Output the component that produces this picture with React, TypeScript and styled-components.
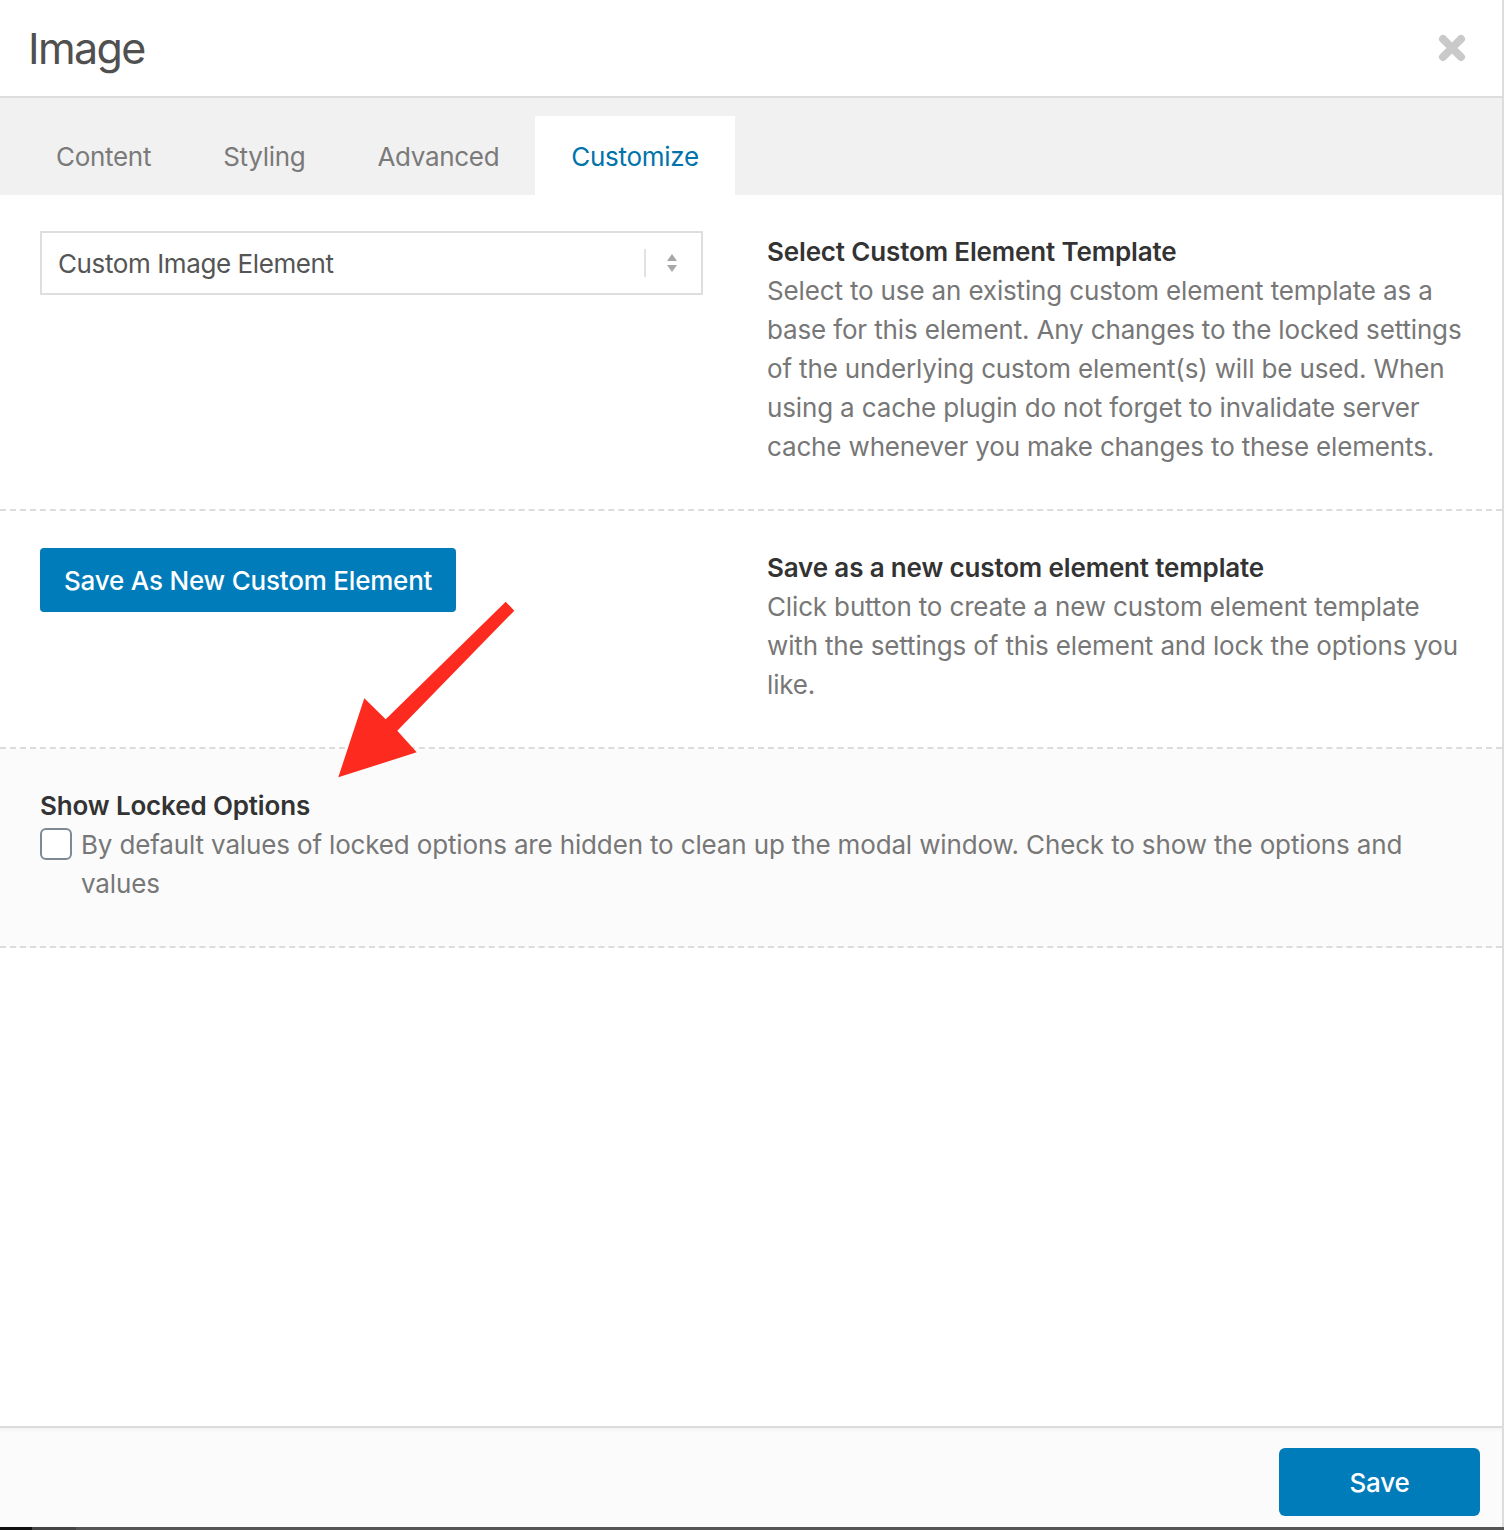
import React from "react";
import styled, { createGlobalStyle } from "styled-components";

const GlobalStyle = createGlobalStyle`
  html, body {
    margin: 0;
    padding: 0;
    background: #dcdcdc;
  }
  body {
    font-family: Inter, "Noto Sans", "Liberation Sans", sans-serif;
    letter-spacing: -0.15px;
    -webkit-font-smoothing: antialiased;
  }
  * {
    box-sizing: border-box;
  }
`;

const Page = styled.div`
  position: relative;
  width: 1504px;
  height: 1530px;
  display: flex;
  flex-direction: column;
`;

const Dialog = styled.div`
  width: 1502px;
  height: 1527px;
  background: #fff;
  display: flex;
  flex-direction: column;
`;

const BottomStrip = styled.div`
  height: 3px;
  background: linear-gradient(to right, #111 0 32px, #444 32px 76px, #555 76px);
`;

const Header = styled.header`
  height: 98px;
  border-bottom: 2px solid #ddd;
  display: flex;
  align-items: center;
  justify-content: space-between;
  padding: 0 36px 0 28px;
`;

const Title = styled.h1`
  margin: 0;
  font-size: 43px;
  font-weight: 400;
  color: #505050;
  letter-spacing: -1.6px;
`;

const CloseButton = styled.button`
  border: 0;
  background: none;
  padding: 0;
  width: 28px;
  height: 28px;
  display: flex;
  align-items: center;
  justify-content: center;
  cursor: pointer;
`;

const TabBar = styled.nav`
  height: 97px;
  background: #f1f1f1;
  display: flex;
  align-items: flex-end;
  padding-left: 20px;
`;

const Tab = styled.div<{ $active?: boolean }>`
  height: 79px;
  padding: 2px 36px 0;
  display: flex;
  align-items: center;
  font-size: 26px;
  letter-spacing: -0.3px;
  color: ${(p) => (p.$active ? "#0073aa" : "#7a7a7a")};
  background: ${(p) => (p.$active ? "#fff" : "transparent")};
`;

const Body = styled.main`
  flex: 1;
  display: flex;
  flex-direction: column;
`;

const Row = styled.section<{ $shaded?: boolean }>`
  padding: 37px 34px 43px 40px;
  border-bottom: 2px dashed #dcdcdc;
  background: ${(p) => (p.$shaded ? "#fbfbfb" : "#fff")};
  display: grid;
  grid-template-columns: ${(p) => (p.$shaded ? "1fr" : "663px 1fr")};
  column-gap: 64px;
  align-items: start;
`;

const SelectBox = styled.div`
  height: 64px;
  margin-top: -1px;
  border: 2px solid #dedede;
  display: flex;
  align-items: center;
  padding: 0 23px 0 16px;
  font-size: 26px;
  letter-spacing: -0.4px;
  color: #555;
`;

const SelectValue = styled.span`
  flex: 1;
`;

const SelectDivider = styled.span`
  width: 2px;
  height: 28px;
  background: #e2e2e2;
  margin-right: 20px;
`;

const PrimaryButton = styled.button<{ $size?: "lg" }>`
  border: 0;
  border-radius: ${(p) => (p.$size === "lg" ? "6px" : "4px")};
  background: #007cba;
  color: #fff;
  font-family: inherit;
  font-size: 26px;
  font-weight: 500;
  letter-spacing: -0.2px;
  height: ${(p) => (p.$size === "lg" ? "68px" : "64px")};
  padding: 0 24px;
  width: ${(p) => (p.$size === "lg" ? "201px" : "auto")};
  cursor: pointer;
  justify-self: start;
`;

const Info = styled.div`
  font-size: 26px;
  line-height: 39px;
`;

const InfoTitle = styled.div`
  font-weight: 600;
  color: #333;
`;

const InfoText = styled.div`
  color: #777;
`;

const CheckLabel = styled.label`
  display: flex;
  align-items: flex-start;
  gap: 9px;
  color: #777;
`;

const CheckBox = styled.span`
  flex: none;
  width: 32px;
  height: 32px;
  margin-top: 3px;
  border: 2px solid #7e8993;
  border-radius: 6px;
  background: #fff;
`;

const Footer = styled.footer`
  height: 101px;
  border-top: 2px solid #dcdcdc;
  background: #fbfbfb;
  box-shadow: inset 0 3px 4px -2px rgba(0, 0, 0, 0.05);
  display: flex;
  justify-content: flex-end;
  align-items: flex-start;
  padding: 20px 22px 0;
`;

const Annotation = styled.svg`
  position: absolute;
  left: 0;
  top: 0;
  pointer-events: none;
`;

function CloseIcon() {
  return (
    <svg width="28" height="28" viewBox="0 0 28 28">
      <path d="M5 5 L23 23 M23 5 L5 23" stroke="#c9c9c9" strokeWidth="8" strokeLinecap="round" />
    </svg>
  );
}

function SortArrows() {
  return (
    <svg width="12" height="20" viewBox="0 0 12 20">
      <path d="M6 1 L11 8 L1 8 Z" fill="#a8a8a8" />
      <path d="M6 19 L11 12 L1 12 Z" fill="#a8a8a8" />
    </svg>
  );
}

const tabs = ["Content", "Styling", "Advanced", "Customize"];

export default function App() {
  return (
    <>
      <GlobalStyle />
      <Page>
        <Dialog>
          <Header>
            <Title>Image</Title>
            <CloseButton aria-label="Close">
              <CloseIcon />
            </CloseButton>
          </Header>
          <TabBar>
            {tabs.map((t) => (
              <Tab key={t} $active={t === "Customize"}>
                {t}
              </Tab>
            ))}
          </TabBar>
          <Body>
            <Row>
              <SelectBox>
                <SelectValue>Custom Image Element</SelectValue>
                <SelectDivider />
                <SortArrows />
              </SelectBox>
              <Info>
                <InfoTitle>Select Custom Element Template</InfoTitle>
                <InfoText>
                  Select to use an existing custom element template as a base for this element. Any changes to the
                  locked settings of the underlying custom element(s) will be used. When using a cache plugin do not
                  forget to invalidate server cache whenever you make changes to these elements.
                </InfoText>
              </Info>
            </Row>
            <Row>
              <PrimaryButton>Save As New Custom Element</PrimaryButton>
              <Info>
                <InfoTitle>Save as a new custom element template</InfoTitle>
                <InfoText>
                  Click button to create a new custom element template with the settings of this element and lock the
                  options you like.
                </InfoText>
              </Info>
            </Row>
            <Row $shaded>
              <Info>
                <InfoTitle>Show Locked Options</InfoTitle>
                <CheckLabel>
                  <CheckBox />
                  <span>
                    By default values of locked options are hidden to clean up the modal window. Check to show the
                    options and values
                  </span>
                </CheckLabel>
              </Info>
            </Row>
          </Body>
          <Footer>
            <PrimaryButton $size="lg">Save</PrimaryButton>
          </Footer>
        </Dialog>
        <BottomStrip />
        <Annotation width="1504" height="1530" viewBox="0 0 1504 1530">
          <polygon
            points="505.7,601.7 514.3,610.7 397.3,730.7 416.7,752.3 338.3,777.3 364.3,698.3 385.7,719.3"
            fill="#fc2a1f"
          />
        </Annotation>
      </Page>
    </>
  );
}
